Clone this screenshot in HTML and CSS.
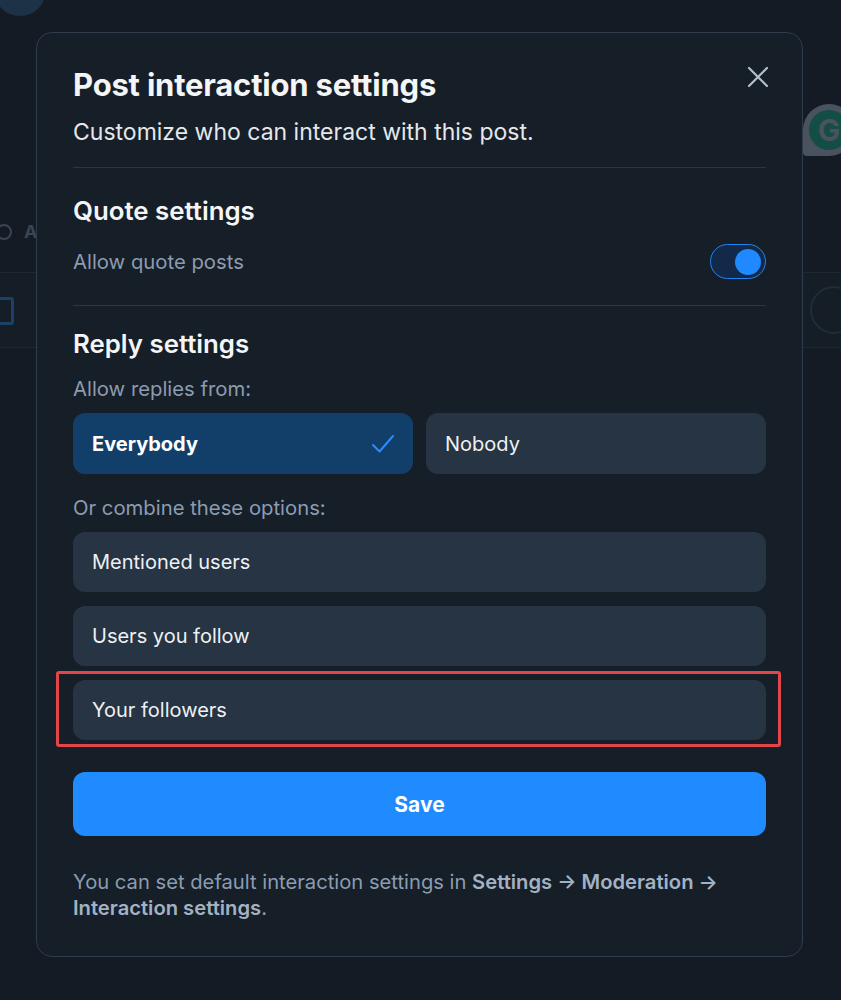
FILE: index.html
```html
<!DOCTYPE html>
<html lang="en">
<head>
<meta charset="utf-8">
<title>Post interaction settings</title>
<link rel="stylesheet" href="styles.css">
</head>
<body>
<div class="backdrop">
  <div class="bg-avatar"></div>
  <div class="bg-row"></div>
  <div class="bg-left-icon"></div>
  <div class="bg-left-text">A</div>
  <div class="bg-blue-icon"></div>
  <div class="bg-right-circle"></div>
  <div class="bg-g"><span>G</span></div>
</div>

<div class="dialog">
  <button class="close" aria-label="Close">
    <svg width="22" height="22" viewBox="0 0 22 22"><path d="M2 2 L20 20 M20 2 L2 20" stroke="#b4bfcc" stroke-width="2.2" stroke-linecap="round" fill="none"/></svg>
  </button>

  <h1 class="title">Post interaction settings</h1>
  <p class="subtitle">Customize who can interact with this post.</p>

  <hr class="divider divider-top">

  <h2 class="section">Quote settings</h2>
  <div class="toggle-row">
    <span class="muted">Allow quote posts</span>
    <span class="toggle"><span class="knob"></span></span>
  </div>

  <hr class="divider divider-mid">

  <h2 class="section section-reply">Reply settings</h2>
  <p class="muted label">Allow replies from:</p>
  <div class="choice-grid">
    <div class="choice selected">
      <span>Everybody</span>
      <svg width="24" height="20" viewBox="0 0 24 20"><path d="M2 11 L8.5 17.5 L22 2" stroke="#2a8cff" stroke-width="2" fill="none" stroke-linecap="round" stroke-linejoin="round"/></svg>
    </div>
    <div class="choice">Nobody</div>
  </div>

  <p class="muted label label-combine">Or combine these options:</p>
  <div class="options">
    <div class="option">Mentioned users</div>
    <div class="option">Users you follow</div>
    <div class="option highlighted">Your followers<span class="highlight-box"></span></div>
  </div>

  <button class="save">Save</button>

  <p class="footer">You can set default interaction settings in <b>Settings → Moderation →</b> <b>Interaction settings</b>.</p>
</div>
</body>
</html>
```

FILE: styles.css
```css
* { box-sizing: border-box; }

html, body {
  margin: 0;
  padding: 0;
  background: #141b24;
  font-family: Inter, "Noto Sans", "Liberation Sans", sans-serif;
  color: #f1f3f6;
  overflow: hidden;
  height: 1000px;
}

/* ---------- backdrop behind the modal ---------- */
.backdrop {
  position: absolute;
  inset: 0;
  z-index: 0;
}
.bg-avatar {
  position: absolute;
  left: -6px;
  top: -36px;
  width: 52px;
  height: 52px;
  border-radius: 50%;
  background: #1d3247;
}
.bg-row {
  position: absolute;
  left: 0;
  right: 0;
  top: 272px;
  height: 76px;
  border-top: 1px solid #1d2631;
  border-bottom: 1px solid #1d2631;
  background: #151d26;
}
.bg-left-icon {
  position: absolute;
  left: -4px;
  top: 224px;
  width: 16px;
  height: 16px;
  border: 2px solid #3a4553;
  border-radius: 50%;
}
.bg-left-text {
  position: absolute;
  left: 24px;
  top: 221px;
  font-size: 18px;
  font-weight: 700;
  color: #3a4553;
}
.bg-blue-icon {
  position: absolute;
  left: -6px;
  top: 297px;
  width: 20px;
  height: 28px;
  border: 3px solid #1b4168;
  border-radius: 3px;
}
.bg-right-circle {
  position: absolute;
  left: 810px;
  top: 286px;
  width: 48px;
  height: 48px;
  border: 2px solid #222c37;
  border-radius: 50%;
}
.bg-g {
  position: absolute;
  left: 803px;
  top: 104px;
  width: 52px;
  height: 52px;
  border-radius: 26px 26px 26px 4px;
  background: #4a5260;
  display: flex;
  align-items: center;
  justify-content: center;
}
.bg-g span {
  width: 40px;
  height: 40px;
  border-radius: 50%;
  background: #134d43;
  color: #4a5260;
  font-weight: 700;
  font-size: 30px;
  line-height: 40px;
  text-align: center;
}

/* ---------- dialog ---------- */
.dialog {
  position: relative;
  z-index: 1;
  margin: 32px 0 0 36px;
  width: 767px;
  height: 925px;
  padding: 33px 36px 36px;
  background: #161e28;
  border: 1px solid #2f3c4b;
  border-radius: 16px;
}

.close {
  position: absolute;
  top: 33px;
  right: 33px;
  width: 24px;
  height: 24px;
  padding: 0;
  border: 0;
  background: transparent;
  display: flex;
  align-items: center;
  justify-content: center;
  transform: translate(1px, -1px);
}

.title {
  margin: 0;
  font-size: 31px;
  line-height: 38px;
  font-weight: 700;
  color: #f3f5f7;
  letter-spacing: -0.2px;
}
.subtitle {
  margin: 13px 0 0;
  font-size: 23px;
  line-height: 30px;
  color: #e4e8ec;
}

.divider {
  border: 0;
  height: 1px;
  background: #2a3643;
  margin: 0;
}
.divider-top { margin-top: 20px; }
.divider-mid { margin-top: 26px; }

.section {
  margin: 27px 0 0;
  font-size: 25.8px;
  line-height: 32px;
  font-weight: 600;
  color: #f3f5f7;
}
.section-reply { margin-top: 22px; }

.muted {
  color: #8c9cb0;
  font-size: 20.3px;
}

.toggle-row {
  margin-top: 17px;
  height: 35px;
  display: flex;
  align-items: center;
  justify-content: space-between;
  line-height: 35px;
}
.toggle {
  width: 56px;
  height: 35px;
  border-radius: 18px;
  border: 1.5px solid #1f86f0;
  background: #12294a;
  display: flex;
  align-items: center;
  justify-content: flex-end;
  padding-right: 4px;
}
.knob {
  width: 26px;
  height: 26px;
  border-radius: 50%;
  background: #2089ff;
}

.label {
  margin: 14px 0 0;
  line-height: 30px;
}
.label-combine { margin-top: 19px; }

.choice-grid {
  margin-top: 9px;
  display: grid;
  grid-template-columns: 1fr 1fr;
  gap: 13px;
}
.choice {
  height: 61px;
  border-radius: 12px;
  background: #263443;
  display: flex;
  align-items: center;
  justify-content: space-between;
  padding: 0 18px 0 19px;
  font-size: 20px;
  color: #eef1f4;
}
.choice.selected {
  background: #123f69;
  font-weight: 700;
  color: #ffffff;
}

.options {
  margin-top: 9px;
  display: flex;
  flex-direction: column;
  gap: 14px;
}
.option {
  position: relative;
  height: 60px;
  border-radius: 12px;
  background: #263443;
  display: flex;
  align-items: center;
  padding: 0 19px;
  font-size: 20px;
  color: #eef1f4;
}
.highlight-box {
  position: absolute;
  left: -17px;
  top: -9px;
  right: -15px;
  bottom: -7px;
  border: 3px solid #e2464b;
  border-radius: 3px;
  pointer-events: none;
}

.save {
  display: block;
  width: 100%;
  margin-top: 32px;
  height: 64px;
  border: 0;
  border-radius: 12px;
  background: #1f8bff;
  color: #ffffff;
  font-family: inherit;
  font-size: 21px;
  font-weight: 700;
}

.footer {
  margin: 33px 0 0;
  font-size: 20.2px;
  line-height: 26px;
  color: #8c9cb0;
  max-width: 670px;
}
.footer b {
  color: #a3b2c3;
  font-weight: 600;
}
```
